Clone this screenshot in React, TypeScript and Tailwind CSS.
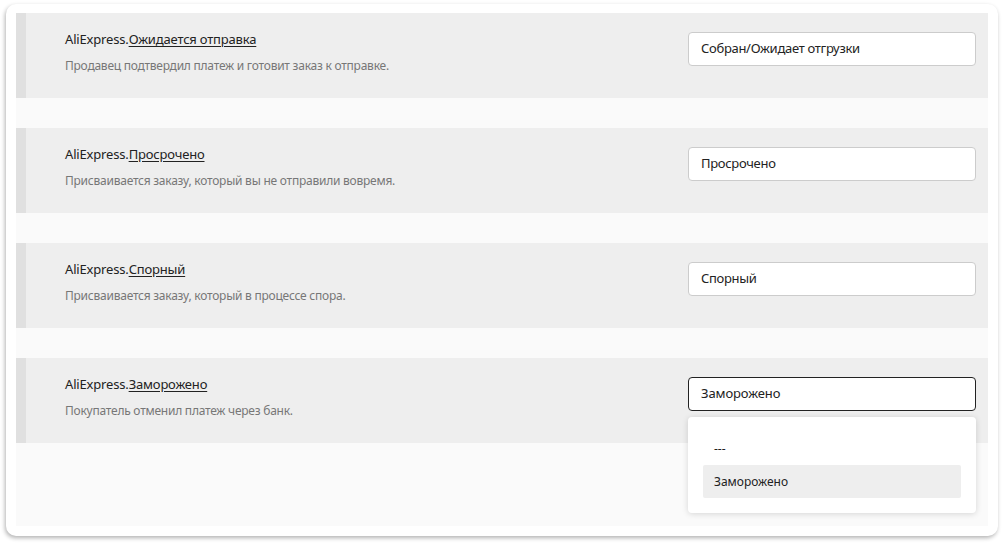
const rows = [
  {
    name: 'Ожидается отправка',
    hint: 'Продавец подтвердил платеж и готовит заказ к отправке.',
    value: 'Собран/Ожидает отгрузки',
  },
  {
    name: 'Просрочено',
    hint: 'Присваивается заказу, который вы не отправили вовремя.',
    value: 'Просрочено',
  },
  {
    name: 'Спорный',
    hint: 'Присваивается заказу, который в процессе спора.',
    value: 'Спорный',
  },
  {
    name: 'Заморожено',
    hint: 'Покупатель отменил платеж через банк.',
    value: 'Заморожено',
  },
]

function StatusRow({ row, open }: { row: (typeof rows)[number]; open: boolean }) {
  return (
    <div className="flex h-[85px] bg-[#eeeeee]">
      <div className="w-[10px] bg-[#e0e0e0]" />
      <div className="flex flex-1 pl-[39px] pr-[12px] pt-[17px]">
        <div className="flex-1">
          <div className="text-[13px] leading-[18px] tracking-[-0.17px] text-[#222]">
            AliExpress.<span className="underline underline-offset-2">{row.name}</span>
          </div>
          <div className="mt-[9px] text-[12px] leading-[18px] tracking-[-0.24px] text-[#777]">{row.hint}</div>
        </div>
        <div className="relative mt-[2px] w-[288px]">
          <div
            className={
              open
                ? 'flex h-[34px] items-center rounded-[4px] border border-[#222] bg-white px-[12px] text-[13px] tracking-[-0.1px] text-[#222]'
                : 'flex h-[34px] items-center rounded-[4px] border border-[#ccc] bg-white px-[12px] text-[13px] tracking-[-0.3px] text-[#222]'
            }
          >
            {row.value}
          </div>
          {open && (
            <div className="absolute left-0 top-[40px] z-10 w-[288px] rounded-[4px] bg-white px-[15px] pb-[15px] pt-[17px] shadow-[0_1px_6px_rgba(0,0,0,0.15)]">
              <div className="flex h-[30px] items-center px-[11px] text-[12px] text-[#222]">---</div>
              <div className="mt-[1px] flex h-[33px] items-center rounded-[2px] bg-[#eeeeee] px-[11px] text-[12px] text-[#222]">
                {row.value}
              </div>
            </div>
          )}
        </div>
      </div>
    </div>
  )
}

export default function App() {
  return (
    <div className="h-[545px] w-[1004px] bg-white pl-[6px] pr-[6px] pt-[4px] font-['Noto_Sans',sans-serif]">
      <div className="h-[532px] rounded-[10px] bg-white px-[10px] py-[9px] shadow-[-1px_2px_4px_rgba(0,0,0,0.3)]">
        <div className="flex h-[513px] flex-col gap-[30px] bg-[#fafafa]">
          {rows.map((row, i) => (
            <StatusRow key={row.name} row={row} open={i === rows.length - 1} />
          ))}
        </div>
      </div>
    </div>
  )
}
